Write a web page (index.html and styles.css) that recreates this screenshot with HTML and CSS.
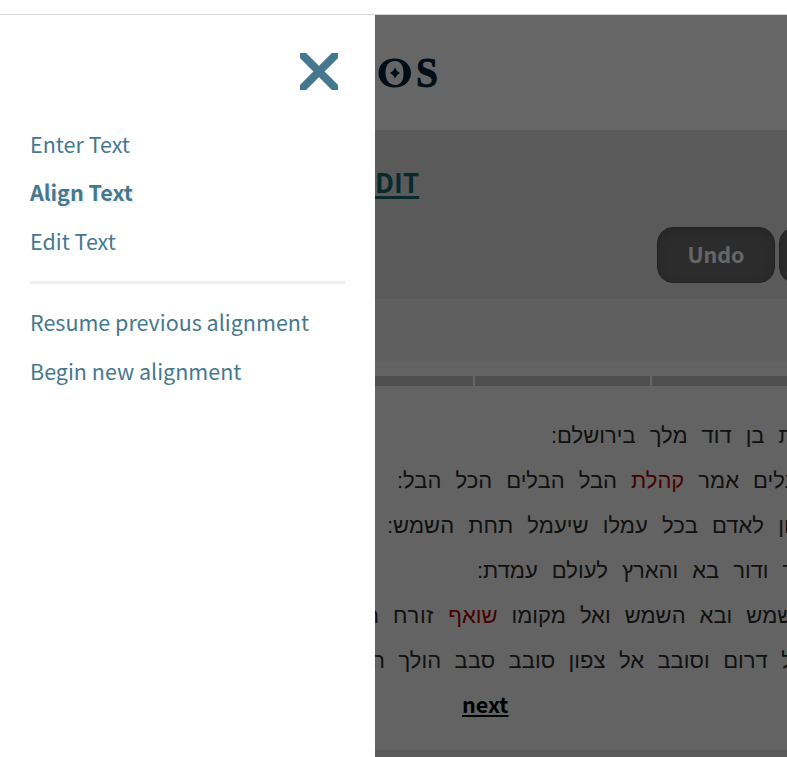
FILE: index.html
```html
<!DOCTYPE html>
<html lang="en">
<head>
<meta charset="utf-8">
<title>Alignment</title>
<link rel="stylesheet" href="styles.css">
</head>
<body>
<div class="topbar"></div>
<div class="app">
  <nav class="drawer">
    <button class="close" aria-label="Close">
      <svg width="38" height="37" viewBox="0 0 38 37"><path d="M3 2.500L35 34.500M35 2.500L3 34.500"/></svg>
    </button>
    <ul class="menu">
      <li>Enter Text</li>
      <li class="current">Align Text</li>
      <li>Edit Text</li>
    </ul>
    <hr>
    <ul class="menu">
      <li>Resume previous alignment</li>
      <li>Begin new alignment</li>
    </ul>
  </nav>
  <main class="page">
    <header class="brand">
      <svg width="70" height="40" viewBox="0 0 70 40">
        <path fill-rule="evenodd" d="M19.500 6.500C29 6.500 36 12.500 36 21S29 35.500 19.500 35.500S3.500 29.500 3.500 21S10 6.500 19.500 6.500ZM20 9C13.500 9 10.500 14 10.500 20.500C10.500 28 14 33 20.500 33C26 33 28.500 28 28.500 21.500C28.500 14 26 9 20 9Z"/>
        <path d="M20 15.500Q21.500 19.500 25 21Q21.500 22.500 20 26.500Q18.500 22.500 15 21Q18.500 19.500 20 15.500Z"/>
        <text x="41" y="35" textLength="22" lengthAdjust="spacingAndGlyphs">S</text>
      </svg>
    </header>
    <section class="toolbar">
      <h1><a>DIT</a></h1>
      <div class="buttons"><button>Undo</button><button></button></div>
    </section>
    <section class="info"></section>
    <section class="text">
      <div class="tabs"><i></i><i></i><i></i></div>
      <div class="lines" lang="he">
        <p class="l1"><span>קהלת</span><span>בן</span><span>דוד</span><span>מלך</span><span>בירושלם:</span></p>
        <p class="l2"><span>הבלים</span><span>אמר</span><span class="hit">קהלת</span><span>הבל</span><span>הבלים</span><span>הכל</span><span>הבל:</span></p>
        <p class="l3"><span>יתרון</span><span>לאדם</span><span>בכל</span><span>עמלו</span><span>שיעמל</span><span>תחת</span><span>השמש:</span></p>
        <p class="l4"><span>הלך</span><span>ודור</span><span>בא</span><span>והארץ</span><span>לעולם</span><span>עמדת:</span></p>
        <p class="l5"><span>השמש</span><span>ובא</span><span>השמש</span><span>ואל</span><span>מקומו</span><span class="hit">שואף</span><span class="wide">זורח</span><span>ה</span></p>
        <p class="l6"><span>אל</span><span>דרום</span><span>וסובב</span><span>אל</span><span>צפון</span><span>סובב</span><span>סבב</span><span>הולך</span><span>ה</span></p>
      </div>
      <a class="next">next</a>
    </section>
    <footer></footer>
    <div class="shade"></div>
  </main>
</div>
</body>
</html>
```
FILE: styles.css
```css
* { box-sizing: border-box; }
body { margin: 0; height: 757px; overflow: hidden; background: #fff; font: 21.5px/30px "Noto Sans CJK SC", "Open Sans", sans-serif; }
.topbar { height: 15px; border-bottom: 1px solid #d8d8d8; }
.app { display: grid; grid-template-columns: 375px 412px; height: 742px; }
.drawer { padding: 38px 30px 0; color: #45788f; }
.close { display: block; margin: 0 7px 0 auto; padding: 0; border: 0; background: none; width: 38px; height: 37px; }
.close svg { display: block; }
.close path { stroke: #45788f; stroke-width: 8; stroke-linecap: round; }
.menu { list-style: none; margin: 0; padding: 0; }
.close + .menu { margin-top: 39px; }
.menu li { height: 30px; margin-bottom: 18.5px; white-space: nowrap; }
.menu .current { font-weight: 700; text-shadow: 2px 2px 1px #eee; line-height: 28px; }
hr { height: 3px; margin: 25px 0 23px; border: 0; background: #eee; }

.page { position: relative; overflow: hidden; display: flex; flex-direction: column; background: #fff; }
.shade { position: absolute; inset: 0; background: rgba(0, 0, 0, .6); }
.brand { height: 115px; padding-top: 37px; }
.brand svg { display: block; fill: #002038; }
.brand text { font: 700 43px "Liberation Serif", serif; stroke: #002038; stroke-width: .8; }
.toolbar { height: 169px; background: #e1e1e1; }
h1 { margin: 0; padding-top: 35px; font-size: 26.5px; line-height: 34px; color: #14696f; }
h1 a { text-decoration: underline; text-decoration-thickness: 3px; text-underline-offset: 3px; text-decoration-skip-ink: none; }
.buttons { display: flex; gap: 4px; margin: 28px 0 0 282px; }
.buttons button { flex: none; width: 118px; height: 56px; padding: 0 0 3px; border: 1px solid #555; border-radius: 16px; background: #6e6e6e; box-shadow: inset 0 4px 8px #606060; color: #fff; font: 700 21.5px/30px "Noto Sans CJK SC", sans-serif; }
.info { height: 62px; background: #eee; border-top: 1px solid #f0f0f0; }
.text { flex: 1; background: #f8f8f8; padding-top: 15px; }
.tabs { display: flex; gap: 2px; height: 10px; background: #fff; }
.tabs i { flex: none; width: 175px; background: #c3c3c3; }
.tabs i:first-child { width: 98px; }
.lines { padding-top: 27px; font: 22px/45px "Liberation Sans", sans-serif; color: #2b2b2b; }
.lines p { direction: rtl; display: flex; justify-content: flex-end; gap: 14px; margin: 0; white-space: nowrap; }
.lines span { flex: none; }
.lines .hit { color: #b00000; }
.l1 { padding-left: 176px; }
.l2 { padding-left: 22px; }
.lines .l3 { padding-left: 12px; gap: 14.2px; }
.l4 { padding-left: 102px; }
.lines .l5 { margin-left: -10px; }
.wide { letter-spacing: .7px; }
.lines .l6 { margin-left: -4px; gap: 13.5px; }
.next { display: block; margin: 6px 0 0 87px; font-weight: 700; color: #000; text-decoration: underline; text-decoration-thickness: 2px; text-underline-offset: 2px; }
footer { height: 7px; background: #e1e1e1; }
```
